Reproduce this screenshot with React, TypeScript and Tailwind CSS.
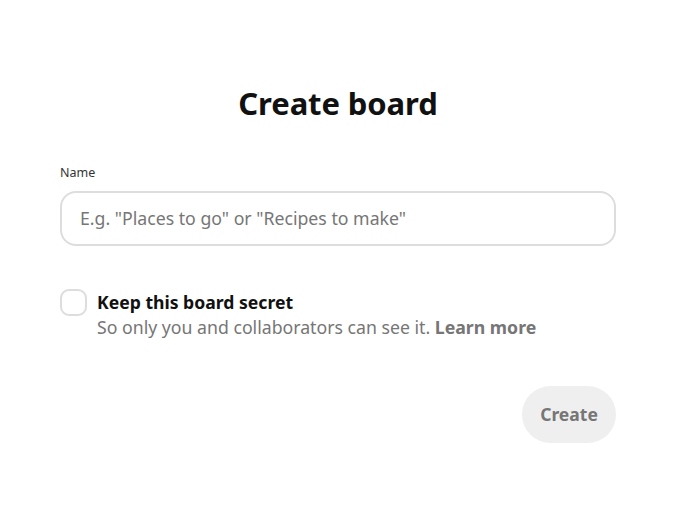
import React from "react";

export default function App() {
  return (
    <div
      className="min-h-screen w-full bg-white text-[#111111]"
      style={{ fontFamily: '"Noto Sans", "Open Sans", sans-serif' }}
    >
      <div className="pl-[60px] pr-[59px] pt-[82px] w-[675px]">
        {/* Title */}
        <h1 className="text-center text-[31px] font-bold leading-[42px] tracking-[-0.1px]">
          Create board
        </h1>

        {/* Name field */}
        <label className="mt-[41px] block text-[12.5px] leading-[16px] text-[#333333]">
          Name
        </label>
        <div className="mt-[10px] h-[55px] rounded-[16px] border-2 border-[#dddddd] flex items-center px-[18px]">
          <input
            className="w-full bg-transparent outline-none text-[17.7px] placeholder:text-[#767676]"
            placeholder={'E.g. "Places to go" or "Recipes to make"'}
          />
        </div>

        {/* Secret toggle */}
        <div className="mt-[43px] flex items-start gap-[10px]">
          <div className="w-[27px] h-[27px] shrink-0 rounded-[9px] border-2 border-[#dddddd]" />
          <div className="flex flex-col">
            <span className="text-[17.6px] font-bold leading-[26px]">
              Keep this board secret
            </span>
            <span className="text-[17.7px] leading-[25px] text-[#767676]">
              So only you and collaborators can see it.{" "}
              <span className="font-bold">Learn more</span>
            </span>
          </div>
        </div>

        {/* Action */}
        <div className="mt-[46px] flex justify-end">
          <button className="h-[57px] w-[94px] rounded-full bg-[#efefef] text-[17.5px] font-bold text-[#767676]">
            Create
          </button>
        </div>
      </div>
    </div>
  );
}
